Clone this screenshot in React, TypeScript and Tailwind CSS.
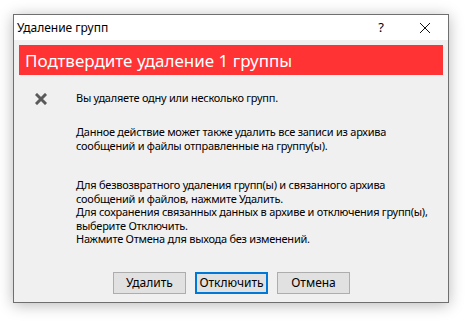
import React from "react";

export default function App() {
  const font = { fontFamily: '"Noto Sans", "Liberation Sans", sans-serif' };
  return (
    <div className="w-[468px] h-[322px] bg-white pl-[13px] pt-[14px]" style={font}>
      <div className="w-[436px] h-[289px] border border-[#6f6f6f] bg-[#f0f0f0] flex flex-col shadow-[0_2px_14px_rgba(0,0,0,0.28)]">
        <div className="h-[25px] bg-white flex items-center pl-[3px] text-[12px] text-black">
          <span className="flex-1 leading-none">Удаление групп</span>
          <span className="w-[20px] text-center text-[13px] mr-[28px]">?</span>
          <svg width="12" height="12" viewBox="0 0 12 12" className="mr-[17px]">
            <path d="M1 1L11 11M11 1L1 11" stroke="#111" strokeWidth="1" />
          </svg>
        </div>
        <div className="mx-[5px] mt-[5px] h-[30px] bg-[#ff3333] text-white text-[17px] flex items-center pl-[6px] leading-none">
          Подтвердите удаление 1 группы
        </div>
        <div className="flex mt-[16px]">
          <div className="w-[62px] pl-[21px] pt-[2px]">
            <svg width="12" height="12" viewBox="0 0 12 12">
              <path d="M2 2L10 10M10 2L2 10" stroke="#5a5a5a" strokeWidth="3" strokeLinecap="square" />
            </svg>
          </div>
          <div className="text-[11px] leading-[14px] text-black tracking-[-0.25px]">
            <p>Вы удаляете одну или несколько групп.</p>
            <p className="mt-[20px]">Данное действие может также удалить все записи из архива<br />сообщений и файлы отправленные на группу(ы).</p>
            <p className="mt-[25px] leading-[13.5px]">Для безвозвратного удаления групп(ы) и связанного архива<br />сообщений и файлов, нажмите Удалить.<br />Для сохранения связанных данных в архиве и отключения групп(ы),<br />выберите Отключить.<br />Нажмите Отмена для выхода без изменений.</p>
          </div>
        </div>
        <div className="mt-auto mb-[8px] flex pl-[99px] gap-[9px] text-[12px] text-black">
          <button className="w-[73px] h-[22px] bg-[#e1e1e1] border border-[#adadad] leading-none">Удалить</button>
          <button className="w-[73px] h-[22px] bg-[#e1e1e1] border-2 border-[#0078d7] leading-none">Отключить</button>
          <button className="w-[73px] h-[22px] bg-[#e1e1e1] border border-[#adadad] leading-none">Отмена</button>
        </div>
      </div>
    </div>
  );
}
